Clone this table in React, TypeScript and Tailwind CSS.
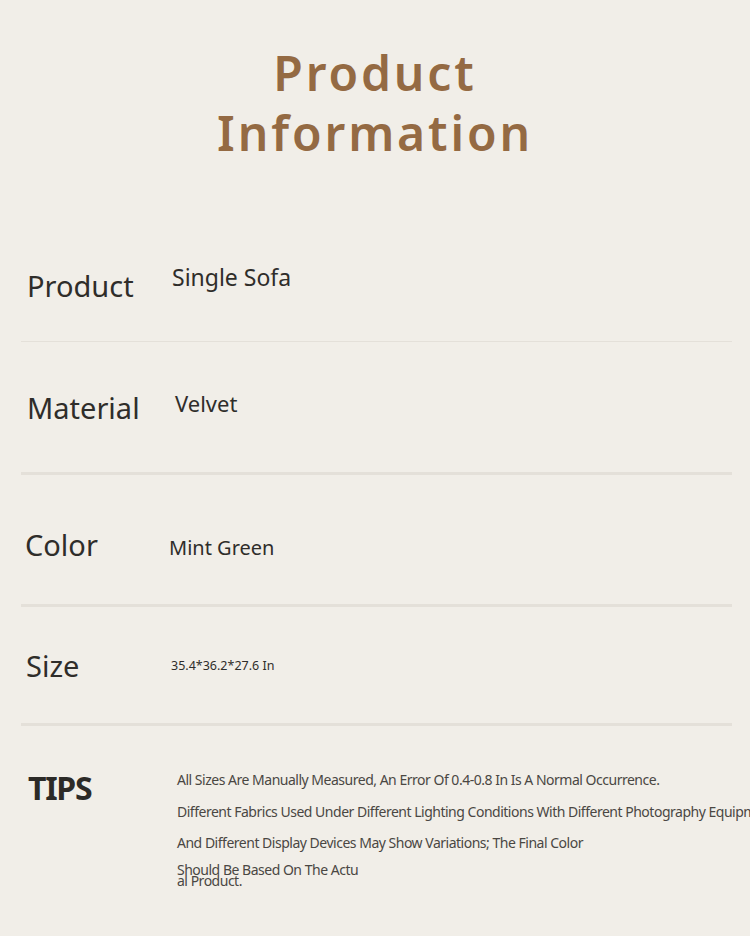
const rows = [
  {
    label: 'Product',
    value: 'Single Sofa',
    h: 'h-[96px]',
    labelCls: 'mt-[21px] ml-[27px] w-[145px]',
    valueCls: 'mt-[16px] text-[23px] leading-[32px]',
    divider: 'h-px bg-[#e4e0d9]',
  },
  {
    label: 'Material',
    value: 'Velvet',
    h: 'h-[130px]',
    labelCls: 'mt-[46px] ml-[27px] w-[148px]',
    valueCls: 'mt-[46px] text-[22px] leading-[30px]',
    divider: 'h-[3px] bg-[#e4e0d9]',
  },
  {
    label: 'Color',
    value: 'Mint Green',
    h: 'h-[129px]',
    labelCls: 'mt-[50px] ml-[25px] w-[144px]',
    valueCls: 'mt-[59px] text-[20px] leading-[28px]',
    divider: 'h-[3px] bg-[#e4e0d9]',
  },
  {
    label: 'Size',
    value: '35.4*36.2*27.6 In',
    h: 'h-[116px]',
    labelCls: 'mt-[39px] ml-[26px] w-[145px]',
    valueCls: 'mt-[50px] text-[12.5px] leading-[18px]',
    divider: 'h-[3px] bg-[#e4e0d9]',
  },
];

const tips = [
  'All Sizes Are Manually Measured, An Error Of 0.4-0.8 In Is A Normal Occurrence.',
  'Different Fabrics Used Under Different Lighting Conditions With Different Photography Equipment',
  'And Different Display Devices May Show Variations; The Final Color',
];

export default function App() {
  return (
    <div
      className="w-[750px] h-[936px] overflow-hidden bg-[#f1eee8] text-[#2f2d2a]"
      style={{ fontFamily: '"Noto Sans", "Open Sans", sans-serif' }}
    >
      {/* Title — two lines, wide tracking, warm brown */}
      <h1 className="pt-[43px] text-center text-[48px] leading-[60px] font-semibold tracking-[0.06em] text-[#946a43]">
        Product
        <br />
        Information
      </h1>

      <div className="h-[82px]" />

      {rows.map((row) => (
        <div key={row.label}>
          <div className={`flex items-start ${row.h}`}>
            <span className={`text-[29px] leading-[40px] shrink-0 ${row.labelCls}`}>{row.label}</span>
            <span className={`whitespace-nowrap ${row.valueCls}`}>{row.value}</span>
          </div>
          <div className={`mx-[21px] w-[711px] ${row.divider}`} />
        </div>
      ))}

      {/* Tips */}
      <div className="flex items-start">
        <span className="ml-[28px] mt-[42px] w-[149px] shrink-0 text-[32px] leading-[40px] font-bold tracking-[-0.04em] text-[#2c2a27]">
          TIPS
        </span>
        <div className="mt-[44px] flex flex-col text-[14px] tracking-[-0.035em] text-[#4a4743] whitespace-nowrap">
          {tips.map((t) => (
            <span key={t} className="leading-[19px] mb-[12.5px]">
              {t}
            </span>
          ))}
          <span className="leading-[11px] -mt-[1px]">
            Should Be Based On The Actu
            <br />
            al Product.
          </span>
        </div>
      </div>
    </div>
  );
}
